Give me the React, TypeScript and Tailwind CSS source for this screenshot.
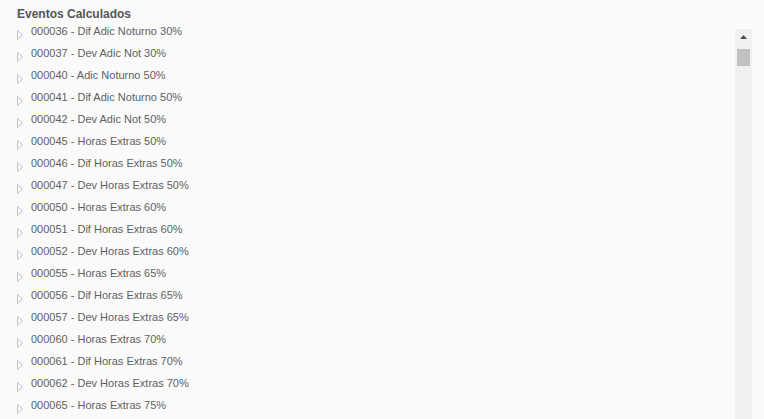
const eventos = [
  '000036 - Dif Adic Noturno 30%',
  '000037 - Dev Adic Not 30%',
  '000040 - Adic Noturno 50%',
  '000041 - Dif Adic Noturno 50%',
  '000042 - Dev Adic Not 50%',
  '000045 - Horas Extras 50%',
  '000046 - Dif Horas Extras 50%',
  '000047 - Dev Horas Extras 50%',
  '000050 - Horas Extras 60%',
  '000051 - Dif Horas Extras 60%',
  '000052 - Dev Horas Extras 60%',
  '000055 - Horas Extras 65%',
  '000056 - Dif Horas Extras 65%',
  '000057 - Dev Horas Extras 65%',
  '000060 - Horas Extras 70%',
  '000061 - Dif Horas Extras 70%',
  '000062 - Dev Horas Extras 70%',
  '000065 - Horas Extras 75%',
];

const Arrow = () => (
  <svg className="mt-[6px] shrink-0" width="6" height="10" viewBox="0 0 6 10">
    <path d="M0.5 0.5 L5.5 5 L0.5 9.5 Z" fill="none" stroke="#c4c4c4" strokeWidth="1" />
  </svg>
);

export default function App() {
  return (
    <div className="flex h-[419px] w-[764px] flex-col overflow-hidden bg-[#fafafa] font-['Liberation_Sans',Arial,sans-serif]">
      {/* Titulo */}
      <div className="pl-[17px] pt-[7px] text-[12px] font-bold leading-[14px] text-[#555]">
        Eventos Calculados
      </div>

      <div className="flex min-h-0 flex-1 pr-[12px] pt-[3px]">
        <ul className="flex-1 overflow-hidden pl-[17px]">
          {eventos.map((e) => (
            <li key={e} className="flex h-[22px] items-start gap-[8px]">
              <Arrow />
              <span className="text-[11px] leading-[14px] text-[#5f5f5f]">{e}</span>
            </li>
          ))}
        </ul>

        {/* barra de rolagem */}
        <div className="mt-[5px] flex w-[17px] flex-col items-center bg-[#f0f0f0]">
          <svg className="mt-[6px]" width="7" height="4" viewBox="0 0 7 4">
            <path d="M3.5 0 L7 4 L0 4 Z" fill="#505050" />
          </svg>
          <div className="mt-[10px] h-[17px] w-[13px] bg-[#c1c1c1]" />
        </div>
      </div>
    </div>
  );
}
